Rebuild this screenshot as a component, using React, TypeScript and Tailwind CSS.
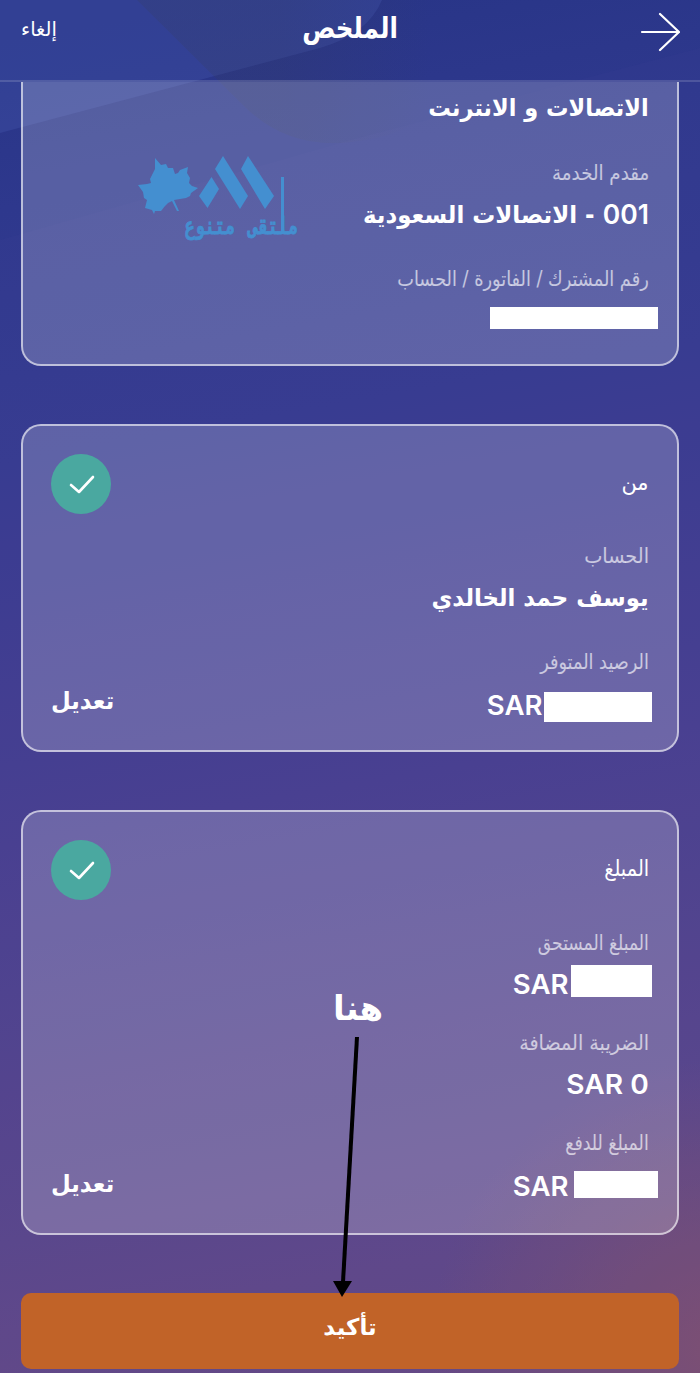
import type { ReactNode } from "react";

const arabic = "font-['DejaVu_Sans',sans-serif]";
const latin = "font-[Inter,sans-serif]";

function Line({ h, className = "", fit = "", children }: { h: string; className?: string; fit?: string; children: ReactNode }) {
  return (
    <div className={`flex items-center whitespace-nowrap ${h} ${className}`}>
      <span className={`inline-block origin-right ${fit}`}>{children}</span>
    </div>
  );
}

function Backdrop() {
  return (
    <svg className="absolute inset-0 h-[1373px] w-[700px]" viewBox="0 0 700 1373" preserveAspectRatio="none">
      <defs>
        <linearGradient id="base" gradientUnits="userSpaceOnUse" x1="230" y1="0" x2="470" y2="1373">
          <stop offset="0" stopColor="#283587" />
          <stop offset="0.12" stopColor="#2e388d" />
          <stop offset="0.3" stopColor="#373b90" />
          <stop offset="0.57" stopColor="#4a4090" />
          <stop offset="0.85" stopColor="#5d488b" />
          <stop offset="1" stopColor="#694a84" />
        </linearGradient>
        <radialGradient id="glow" gradientUnits="userSpaceOnUse" cx="720" cy="1350" r="290">
          <stop offset="0" stopColor="#88536a" stopOpacity="0.8" />
          <stop offset="1" stopColor="#88536a" stopOpacity="0" />
        </radialGradient>
        <linearGradient id="fold" gradientUnits="userSpaceOnUse" x1="280" y1="0" x2="430" y2="0">
          <stop offset="0" stopColor="#353d60" stopOpacity="0.24" />
          <stop offset="1" stopColor="#353d60" stopOpacity="0" />
        </linearGradient>
      </defs>
      <rect width="700" height="1373" fill="url(#base)" />
      <rect width="700" height="1373" fill="url(#glow)" />
      <path d="M0 0H382Q368 34 320 48L0 133Z" fill="#4050a8" fillOpacity="0.42" />
      <path d="M137 0L246 108Q290 150 352 142Q460 132 520 0Z" fill="url(#fold)" />
      <path d="M700 48L350 140L0 240V1373H700Z" fill="#4040a0" fillOpacity="0.1" />
    </svg>
  );
}

function Check() {
  return (
    <div className="flex size-[60px] items-center justify-center rounded-full bg-[#4aa8a0]">
      <svg width="60" height="60" viewBox="0 0 60 60" fill="none" stroke="#fff" strokeWidth="2.6" strokeLinecap="round" strokeLinejoin="round">
        <path d="M20 31L28 38L42 23" />
      </svg>
    </div>
  );
}

function Logo() {
  return (
    <div className="relative h-[90px] w-[165px] text-[#448fd0]">
      <svg width="165" height="90" viewBox="0 0 165 90" fill="currentColor">
        <path d="M18 3L24 10L29 9L31 13L36 13L38 19L41 18L43 15L51 12L50 18L53 23L52 28L55 31L61 33L54 38L53 41L49 43L37 45L42 56L40 56L35 46L31 48L28 51L24 56L18 56L17 59L15 55L8 53L10 45L7 43L6 37L1 30L10 29L14 28L13 24L16 18L18 14Z" />
        <path d="M74.500 22L82 34L70.500 53L62 41Z" />
        <path d="M86 1L111 41L103 54L78 14Z" />
        <path d="M111 1L137 41L128 54L104 14Z" />
        <rect x="144" y="22" width="3" height="57" />
      </svg>
      <div
        dir="rtl"
        className="absolute left-[48px] top-[60px] flex w-[113px] scale-y-[1.4] justify-between whitespace-nowrap font-['DejaVu_Sans_Mono',monospace] text-[16.600px] font-bold leading-[24px] [-webkit-text-stroke:0.6px_#448fd0]"
      >
        <span>ملتقى</span>
        <span>متنوع</span>
      </div>
    </div>
  );
}

const card = "relative mx-[21px] border-2 border-white/60 bg-white/20 px-[28px]";
const label = `text-[20.500px] text-white/65 ${arabic}`;
const strong = `text-[24px] font-bold text-white ${arabic}`;
const money = `text-[26.500px] font-semibold text-white ${latin}`;
const heading = `text-[22px] text-white ${arabic}`;

export default function App() {
  return (
    <main dir="rtl" className="relative h-[1373px] w-[700px] overflow-hidden bg-[#2e388d]">
      <Backdrop />
      <div className="relative flex flex-col">
        <header dir="ltr" className="grid h-[82px] grid-cols-3 border-b-2 border-white/15 px-[20px] text-white">
          <div className={`pl-px pt-[16px] text-[19.500px] leading-[28px] ${arabic}`}>إلغاء</div>
          <div className={`scale-x-[.85] pt-[9px] text-center text-[29px] font-bold leading-[38px] ${arabic}`}>الملخص</div>
          <div className="flex justify-end pt-[10px]">
            <svg width="40" height="44" viewBox="0 0 40 44" fill="none" stroke="white" strokeWidth="2.2" strokeLinecap="round" strokeLinejoin="round">
              <path d="M2 22H39M20 4L39 22L20 40" />
            </svg>
          </div>
        </header>

        <section className={`${card} h-[284px] rounded-b-[20px] border-t-0 pt-[8px]`}>
          <Line h="h-[36px]" fit="scale-x-[.935]" className={strong}>الاتصالات و الانترنت</Line>
          <Line h="h-[30px]" fit="scale-x-[.89]" className={`mt-[32px] ${label}`}>مقدم الخدمة</Line>
          <div className="mt-[7px] flex h-[40px] items-center whitespace-nowrap">
            <span className={money}>001</span>
            <span className={`ms-[8px] inline-block origin-right scale-x-[.955] ${strong}`}>- الاتصالات السعودية</span>
          </div>
          <Line h="h-[30px]" fit="scale-x-[.865]" className={`mt-[29px] ${label}`}>رقم المشترك / الفاتورة / الحساب</Line>
          <div className="-ms-[9px] mt-[13px] h-[22px] w-[168px] bg-white" />
          <div dir="ltr" className="absolute left-[114px] top-[73px]">
            <Logo />
          </div>
        </section>

        <section className={`${card} mt-[58px] h-[328px] rounded-[20px]`}>
          <div className="flex justify-between pt-[28px]">
            <Line h="h-[57px]" fit="scale-x-[.95]" className={heading}>من</Line>
            <Check />
          </div>
          <Line h="h-[30px]" fit="scale-x-[.94]" className={`mt-[27px] ${label}`}>الحساب</Line>
          <Line h="h-[40px]" fit="scale-x-[.95]" className={`mt-[7px] ${strong}`}>يوسف حمد الخالدي</Line>
          <Line h="h-[30px]" fit="scale-x-[.863]" className={`mt-[29px] ${label}`}>الرصيد المتوفر</Line>
          <div className="mt-[9px] flex h-[40px] justify-between">
            <div dir="ltr" className="-mr-[3px] flex">
              <span className={`inline-block origin-right scale-x-[1.04] leading-[38px] ${money}`}>SAR</span>
              <span className="ml-px mt-[6px] h-[30px] w-[108px] bg-white" />
            </div>
            <Line h="h-[30px]" fit="origin-left! scale-x-[.945]" className={strong}>تعديل</Line>
          </div>
        </section>

        <section className={`${card} mt-[58px] h-[425px] rounded-[20px]`}>
          <div className="flex justify-between pt-[28px]">
            <Line h="h-[56px]" fit="scale-x-[.88]" className={heading}>المبلغ</Line>
            <Check />
          </div>
          <Line h="h-[30px]" fit="scale-x-[.836]" className={`mt-[28px] ${label}`}>المبلغ المستحق</Line>
          <div dir="ltr" className="-mr-[3px] mt-[7px] flex h-[34px] justify-end">
            <span className={`inline-block origin-right scale-x-[1.04] leading-[38px] ${money}`}>SAR</span>
            <span className="ml-[2px] h-[32px] w-[81px] bg-white" />
          </div>
          <Line h="h-[30px]" fit="scale-x-[.934]" className={`mt-[29px] ${label}`}>الضريبة المضافة</Line>
          <Line h="h-[40px]" fit="scale-x-[1.06]" className={`mt-[7px] ${money}`}><span dir="ltr">SAR 0</span></Line>
          <Line h="h-[30px]" fit="scale-x-[.846]" className={`mt-[23px] ${label}`}>المبلغ للدفع</Line>
          <div className="mt-[7px] flex h-[40px] justify-between">
            <div dir="ltr" className="-mr-[9px] flex">
              <span className={`inline-block origin-right scale-x-[1.04] leading-[42px] ${money}`}>SAR</span>
              <span className="ml-[5px] mt-[6px] h-[27px] w-[84px] bg-white" />
            </div>
            <Line h="h-[37px]" fit="origin-left! scale-x-[.945]" className={strong}>تعديل</Line>
          </div>
        </section>

        <button className={`mx-[21px] mt-[58px] flex h-[76px] items-start justify-center rounded-[10px] bg-[#c16328] pt-[16px] text-[23px] font-bold leading-[36px] text-white ${arabic}`}>
          تأكيد
        </button>
      </div>

      <div className={`absolute left-[318px] top-[984px] w-[80px] text-center text-[34px] font-bold leading-[48px] text-white ${arabic}`}>هنا</div>
      <svg className="absolute left-[330px] top-[1036px]" width="40" height="264" viewBox="0 0 40 264">
        <path d="M27 1L13 246" stroke="#000" strokeWidth="4" />
        <path d="M3 245H22L12 261Z" />
      </svg>
    </main>
  );
}
